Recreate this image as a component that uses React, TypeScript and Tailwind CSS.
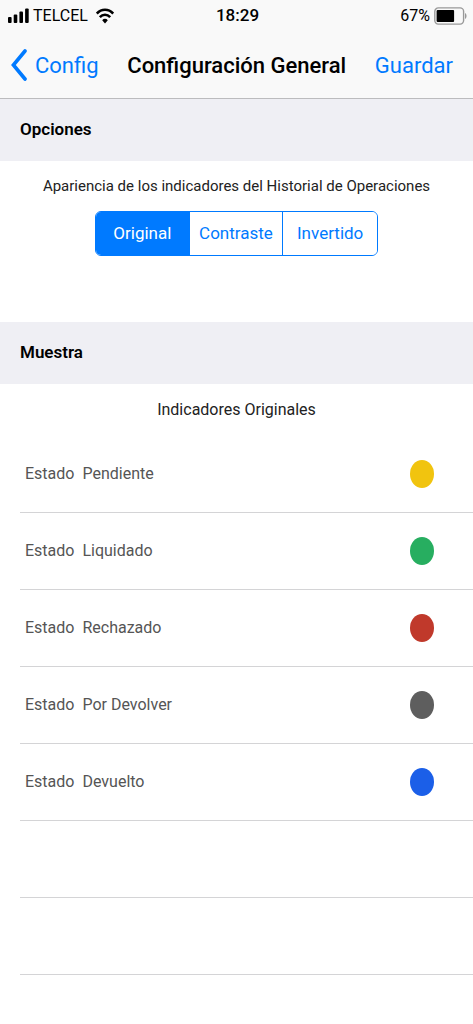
import { useState } from 'react';
import clsx from 'clsx';

const options = [
  { id: 'original', label: 'Original', caption: 'Indicadores Originales' },
  { id: 'contraste', label: 'Contraste', caption: 'Indicadores Contraste' },
  { id: 'invertido', label: 'Invertido', caption: 'Indicadores Invertidos' },
];

const states = [
  { name: 'Pendiente', color: 'bg-[#f1c40f]' },
  { name: 'Liquidado', color: 'bg-[#27ae60]' },
  { name: 'Rechazado', color: 'bg-[#c0392b]' },
  { name: 'Por Devolver', color: 'bg-[#5e5e5e]' },
  { name: 'Devuelto', color: 'bg-[#1b5fe8]' },
];

function StatusBar() {
  return (
    <div className="grid h-8 grid-cols-3 items-center pr-1.5 pl-2 text-base text-black">
      <div className="flex items-center">
        <svg className="mr-1 h-4 w-[21px] shrink-0" viewBox="0 0 21 16" aria-hidden="true">
          <rect x="0" y="9" width="3.6" height="6" rx="1" />
          <rect x="5.7" y="6.5" width="3.6" height="8.5" rx="1" />
          <rect x="11.4" y="3.5" width="3.6" height="11.5" rx="1" />
          <rect x="17.1" y="0.5" width="3.6" height="14.5" rx="1" />
        </svg>
        <span>TELCEL</span>
        <svg className="ml-2 h-4 w-[18px] shrink-0" viewBox="0 0 18 16" fill="none" stroke="#000" strokeWidth="2.5" aria-hidden="true">
          <path d="M0.8 5.6C5.4 0.6 12.6 0.6 17.2 5.6" />
          <path d="M3.8 9.2C6.8 5.9 11.2 5.9 14.2 9.2" />
          <path d="M6.2 12.2C7.8 10.4 10.2 10.4 11.8 12.2L9 15.4Z" fill="#000" stroke="none" />
        </svg>
      </div>
      <span className="text-center text-[17px] font-medium">18:29</span>
      <div className="flex items-center justify-end">
        <span>67%</span>
        <svg className="ml-1 h-[18px] w-[33px] shrink-0" viewBox="0 0 33 18" aria-hidden="true">
          <rect x="0.8" y="0.9" width="28.8" height="16.2" rx="3.5" fill="none" stroke="#999" strokeWidth="1.4" />
          <rect x="2.6" y="3" width="17.5" height="12" rx="1" />
          <path d="M31 6C33 7 33 11 31 12Z" fill="#999" />
        </svg>
      </div>
    </div>
  );
}

function NavBar() {
  return (
    <nav className="flex h-[66px] items-center justify-between pr-5 pl-[11px] text-[22px] text-[#007aff]">
      <a href="#config" className="flex items-center gap-2">
        <svg className="h-8 w-4" viewBox="0 0 16 32" fill="none" stroke="currentColor" strokeWidth="3.6" strokeLinecap="round" aria-hidden="true">
          <path d="M14 2L2.4 16L14 30" />
        </svg>
        Config
      </a>
      <h1 className="font-medium whitespace-nowrap text-black">Configuración General</h1>
      <button type="button">Guardar</button>
    </nav>
  );
}

function SectionHeader({ title }: { title: string }) {
  return (
    <h2 className="flex h-[62px] items-center bg-[#efeff4] px-5 text-[17px] font-semibold text-black">{title}</h2>
  );
}

export default function App() {
  const [selected, setSelected] = useState('original');
  const current = options.find((option) => option.id === selected) ?? options[0];

  return (
    <div className="min-h-screen bg-white font-['Roboto','Liberation_Sans',sans-serif]">
      <header className="border-b border-[#bcbcbe] bg-[#f9f9f9]">
        <StatusBar />
        <NavBar />
      </header>

      <main>
        <section>
          <SectionHeader title="Opciones" />
          <div className="flex flex-col items-center gap-3 px-4 pt-3 pb-[66px]">
            <p id="appearance" className="text-center text-[15px] leading-[26px] text-[#222]">
              Apariencia de los indicadores del Historial de Operaciones
            </p>
            <div
              role="group"
              aria-labelledby="appearance"
              className="grid h-[45px] w-3/5 min-w-[283px] grid-cols-3 divide-x divide-[#007aff] overflow-hidden rounded-md border border-[#007aff]"
            >
              {options.map((option) => (
                <button
                  key={option.id}
                  type="button"
                  aria-pressed={option.id === selected}
                  onClick={() => setSelected(option.id)}
                  className={clsx(
                    'text-[17px]',
                    option.id === selected ? 'bg-[#007aff] text-white' : 'bg-white text-[#007aff]',
                  )}
                >
                  {option.label}
                </button>
              ))}
            </div>
          </div>
        </section>

        <section>
          <SectionHeader title="Muestra" />
          <p className="py-3 text-center text-base leading-7 text-[#222]">{current.caption}</p>
          <ul className="pl-5">
            {states.map((state) => (
              <li
                key={state.name}
                className="flex h-[77px] items-center justify-between border-b border-[#d4d4d6] pr-[39px] pl-[5px] text-base text-[#555]"
              >
                <span className="flex gap-2">
                  <span>Estado</span>
                  <span>{state.name}</span>
                </span>
                <span className={clsx('h-7 w-6 rounded-[50%]', state.color)} />
              </li>
            ))}
            <li className="h-[77px] border-b border-[#d4d4d6]" />
            <li className="h-[77px] border-b border-[#d4d4d6]" />
          </ul>
        </section>
      </main>
    </div>
  );
}
